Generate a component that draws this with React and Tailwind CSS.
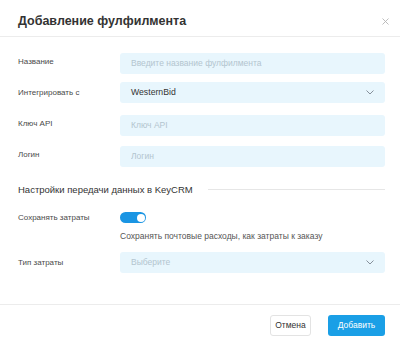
import { useState } from "react";

const Chevron = () => (
    <svg width="8" height="5" viewBox="0 0 8 5" fill="none" stroke="#7a8590" strokeWidth="0.9">
        <path d="M0.5 0.5l3.5 3.5 3.5-3.5" />
    </svg>
);

const Field = ({ label, children }) => (
    <div className="flex items-center h-[21px]">
        <div className="w-[102px] shrink-0 text-[8px] text-[#4a4a4a]">{label}</div>
        <div className="flex-1">{children}</div>
    </div>
);

const Input = ({ placeholder }) => (
    <input placeholder={placeholder}
        className="w-full h-[21px] rounded-[3px] bg-[#e8f6fd] px-[11px] text-[8.5px] outline-none placeholder:text-[#b3c5cf]" />
);

const Select = ({ value, placeholder }) => (
    <div className="w-full h-[21px] rounded-[3px] bg-[#e8f6fd] pl-[11px] pr-[11px] flex items-center justify-between">
        {value
            ? <span className="text-[8.7px] text-[#333]">{value}</span>
            : <span className="text-[8.5px] text-[#b3c5cf]">{placeholder}</span>}
        <Chevron />
    </div>
);

const App = () => {
    const [saveCosts, setSaveCosts] = useState(true)

    return (
        <div className="w-[400px] h-[345px] bg-white font-['Liberation_Sans',Arial,sans-serif] flex flex-col">
            <div className="h-[37px] flex items-start justify-between pl-[18px] pr-[11px] pt-[14px] border-b border-[#ececec]">
                <p className="text-[12.5px] leading-[15px] font-bold text-[#333]">Добавление фулфилмента</p>
                <svg width="7" height="7" viewBox="0 0 7 7" stroke="#b5b5b5" strokeWidth="0.9" className="mt-[4px]">
                    <path d="M0.5 0.5l6 6M6.5 0.5l-6 6" />
                </svg>
            </div>

            <div className="flex-1 pl-[18px] pr-[15px] pt-[14px] flex flex-col">
                <div className="flex flex-col gap-[10px]">
                    <Field label="Название"><Input placeholder="Введите название фулфилмента" /></Field>
                    <Field label="Интегрировать с"><Select value="WesternBid" /></Field>
                    <Field label="Ключ API"><Input placeholder="Ключ API" /></Field>
                    <Field label="Логин"><Input placeholder="Логин" /></Field>
                </div>

                <div className="flex items-center mt-[19px] h-[11px]">
                    <p className="text-[9.5px] leading-[11px] text-[#333] whitespace-nowrap">Настройки передачи данных в KeyCRM</p>
                    <div className="flex-1 h-px bg-[#e6e6e6] ml-[15px]"></div>
                </div>

                <div className="flex mt-[17px]">
                    <div className="w-[102px] shrink-0 text-[8px] leading-[11px] text-[#4a4a4a]">Сохранять затраты</div>
                    <div className="flex flex-col">
                        <button onClick={() => setSaveCosts(!saveCosts)}
                            className={`w-[26px] h-[11px] rounded-full flex items-center px-[1.5px] ${saveCosts ? 'bg-[#1a95e3] justify-end' : 'bg-[#ccc] justify-start'}`}>
                            <span className="w-[8px] h-[8px] rounded-full bg-white"></span>
                        </button>
                        <p className="text-[8.5px] leading-[10px] text-[#555] mt-[8px]">Сохранять почтовые расходы, как затраты к заказу</p>
                    </div>
                </div>

                <div className="mt-[11px]">
                    <Field label="Тип затраты"><Select placeholder="Выберите" /></Field>
                </div>
            </div>

            <div className="h-[41px] border-t border-[#ececec] flex items-start justify-end gap-[17px] pr-[15px] pt-[10px]">
                <button className="h-[21px] w-[41px] border border-[#e3e3e3] rounded-[3px] text-[8.5px] text-[#333] bg-white">Отмена</button>
                <button className="h-[21px] w-[57px] rounded-[3px] text-[8.5px] text-white bg-[#1a9fe6]">Добавить</button>
            </div>
        </div>
    );
}

export default App;
